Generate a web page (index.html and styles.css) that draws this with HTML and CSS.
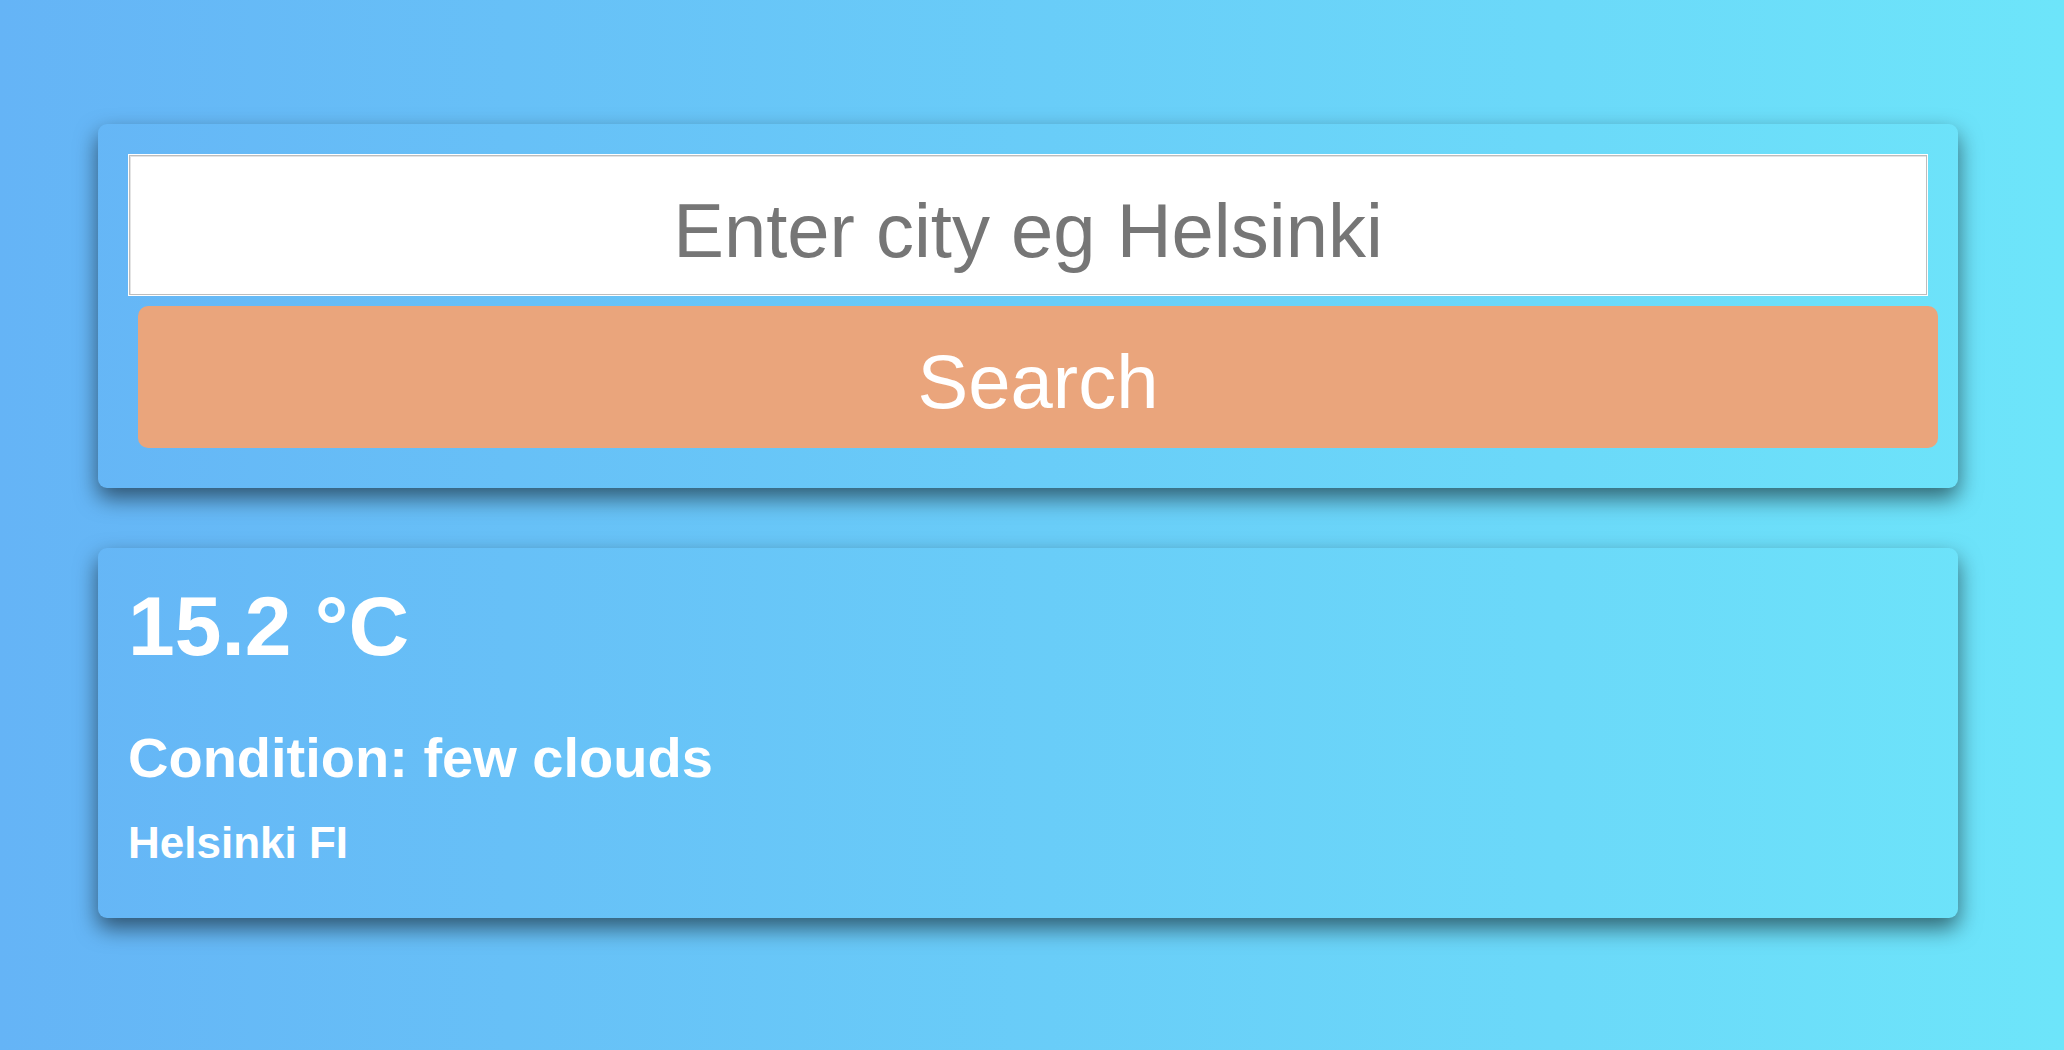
FILE: index.html
```html
<!DOCTYPE html>
<html lang="en">
<head>
<meta charset="utf-8">
<title>Weather</title>
<link rel="stylesheet" href="styles.css">
</head>
<body>
<main class="app">
  <form class="card search-card" onsubmit="return false">
    <input class="city-input" type="text" placeholder="Enter city eg Helsinki">
    <button class="search-btn" type="submit">Search</button>
  </form>
  <section class="card weather-card">
    <h1 class="temp">15.2 °C</h1>
    <h2 class="condition">Condition: few clouds</h2>
    <p class="place">Helsinki FI</p>
  </section>
</main>
</body>
</html>
```
FILE: styles.css
```css
html, body {
  margin: 0;
  padding: 0;
}
body {
  min-height: 100vh;
  background: linear-gradient(to right, #65b4f6, #6de5fa);
  font-family: "Liberation Sans", Arial, Helvetica, sans-serif;
}
.app {
  display: flex;
  flex-direction: column;
  gap: 60px;
  padding: 124px 0 0 98px;
}
.card {
  box-sizing: border-box;
  width: 1860px;
  padding: 30px;
  border-radius: 9px;
  background: transparent;
  box-shadow: 0 10px 22px rgba(0, 0, 0, 0.55);
}
.search-card {
  margin: 0;
}
.city-input {
  display: block;
  box-sizing: border-box;
  width: 100%;
  height: 142px;
  margin: 0;
  padding: 10px 0 0 0;
  border: 1px solid #ffffff;
  background: #ffffff;
  box-shadow: inset 0 0 0 1px #bdbdbd, inset 1px 1px 0 1px #e4e4e4;
  font-family: "Liberation Sans", Arial, Helvetica, sans-serif;
  font-size: 76px;
  color: #333;
  text-align: center;
  outline: none;
}
.city-input::placeholder {
  color: #767676;
  opacity: 1;
}
.search-btn {
  display: block;
  box-sizing: border-box;
  width: 100%;
  height: 142px;
  margin: 10px;
  padding: 8px 0 0 0;
  border: none;
  border-radius: 10px;
  background: #eaa57c;
  color: #ffffff;
  font-family: "Liberation Sans", Arial, Helvetica, sans-serif;
  font-size: 76px;
  cursor: pointer;
}
.weather-card {
  color: #ffffff;
  padding-bottom: 49px;
}
.temp {
  margin: 0;
  font-size: 84px;
  line-height: 96px;
  font-weight: bold;
}
.condition {
  margin: 52px 0 0 0;
  font-size: 56px;
  line-height: 64px;
  font-weight: bold;
}
.place {
  margin: 27px 0 0 0;
  font-size: 44px;
  line-height: 52px;
  font-weight: bold;
}
```
